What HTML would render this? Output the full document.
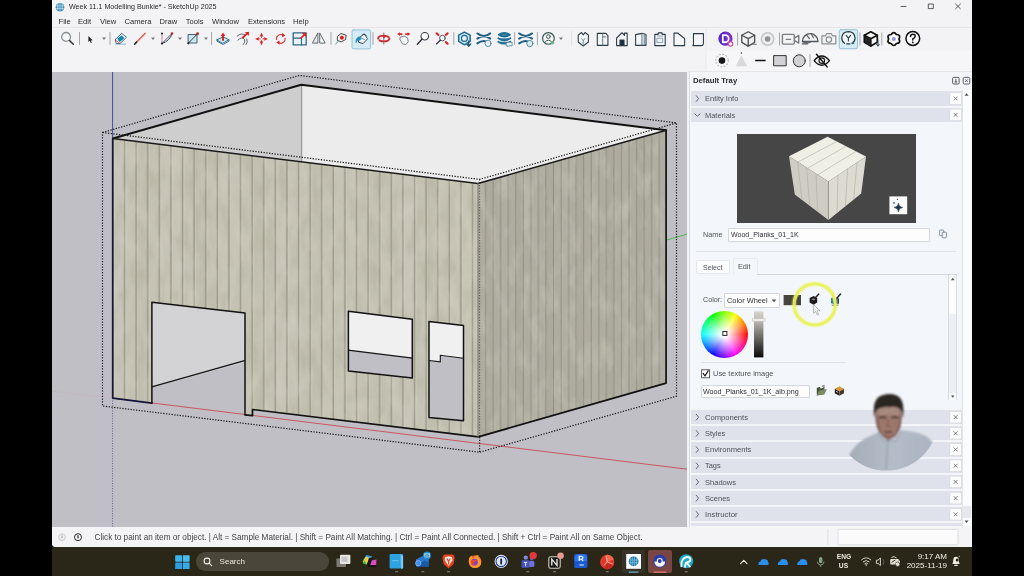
<!DOCTYPE html>
<html>
<head>
<meta charset="utf-8">
<title>SketchUp</title>
<style>
*{box-sizing:border-box;margin:0;padding:0}
html,body{width:1024px;height:576px;overflow:hidden;background:#000;font-family:"Liberation Sans",sans-serif;}
#root{filter:blur(0.45px);position:absolute;left:0;top:0;width:1024px;height:576px;overflow:hidden;background:#000}
.abs{position:absolute}
#win{position:absolute;left:52px;top:0;width:920px;height:547px;background:#f3f3f6;border-radius:0 0 0 4px;overflow:hidden}
#title{position:absolute;left:16.6px;top:1.3px;font-size:8px;color:#2a2a2a;white-space:nowrap;line-height:12px;transform:scaleX(0.891);transform-origin:0 50%}
.menu{position:absolute;top:15.5px;font-size:7.6px;color:#2a2a2a;white-space:nowrap;line-height:11px}
#vp{position:absolute;left:0;top:72px;width:634.5px;height:455px;background:#c0bfc5}
#tray{position:absolute;left:637px;top:72px;width:283px;height:455px;background:#f4f5f9}
.row{position:absolute;width:271px;height:14.2px;background:#dfe2eb;}
.row span{transform-origin:0 50%;position:absolute;left:13.9px;top:2.9px;font-size:7.7px;line-height:10px;color:#4e5159;white-space:nowrap}
.xb{position:absolute;left:260.5px;width:11.6px;height:11.6px;background:#fafbfd;border:0.7px solid #d9dbe2}
.lbl{transform-origin:0 50%;font-size:7.7px;line-height:10px;color:#4e5159;white-space:nowrap}
.inp{background:#fdfdfe;border:0.7px solid #d4d7de;border-radius:1px}
.inp span{transform-origin:0 50%;position:absolute;left:1.4px;top:1.6px;font-size:7.7px;line-height:10px;color:#2e3036;white-space:nowrap}
#status{position:absolute;left:0;top:527px;width:920px;height:20px;background:#f4f4f6}
#status .t{position:absolute;left:42.5px;top:5px;font-size:8.2px;line-height:11px;color:#444;white-space:nowrap}
#taskbar{position:absolute;left:52px;top:547px;width:920px;height:29px;background:#2a2618}
</style>
</head>
<body>
<div id="root">
<div id="win">
  <div id="title">Week 11.1 Modelling Bunkie* - SketchUp 2025</div>
  <div class="menu" style="left:6.5px">File</div>
  <div class="menu" style="left:26px">Edit</div>
  <div class="menu" style="left:48px">View</div>
  <div class="menu" style="left:72.5px">Camera</div>
  <div class="menu" style="left:107.5px">Draw</div>
  <div class="menu" style="left:133.8px">Tools</div>
  <div class="menu" style="left:160px">Window</div>
  <div class="menu" style="left:196px">Extensions</div>
  <div class="menu" style="left:241px">Help</div>
  <div id="msep" class="abs" style="left:0;top:27.2px;width:920px;height:1px;background:#e6e6ea"></div>
  <svg class="abs" style="left:-52px;top:0" width="1024" height="76" viewBox="0 0 1024 76" fill="none" stroke-linecap="round" stroke-linejoin="round">
<defs>
<path id="dd" d="M-2 -1 L2 -1 L0 1.4 Z" fill="#777" stroke="none"/>
<path id="sep" d="M0 -6 V6" stroke="#9a9ca2" stroke-width="0.9"/>
</defs>
<rect id="tb2bg" x="706" y="50.5" width="266" height="21" fill="#f6f6f9" stroke="none"/><path d="M706 29 V71" stroke="#e6e6ea" stroke-width="0.8"/><path d="M689 71.7 H972" stroke="#dcdce1" stroke-width="0.8"/>
<!-- window controls -->
<path d="M901 6.5 H906" stroke="#333" stroke-width="0.8"/>
<rect x="928.7" y="4" width="4.6" height="4.6" stroke="#333" stroke-width="0.8"/>
<path d="M955.6 4 L960.4 8.8 M960.4 4 L955.6 8.8" stroke="#333" stroke-width="0.8"/>
<!-- app icon -->
<g transform="translate(60,7.2)">
<circle r="4.3" fill="#1b78a8"/>
<path d="M-2.6 -2.8 V3 M-0.9 -3.9 V4 M0.9 -3.9 V4 M2.6 -2.8 V3 M-3.8 -1.2 H3.8 M-3.8 1.2 H3.8" stroke="#e6f2f8" stroke-width="0.6"/>
</g>
<!-- row1 -->
<g transform="translate(0,38.5)">
<!-- search -->
<g transform="translate(67.5,0)"><circle cx="-1.4" cy="-1.6" r="4.4" stroke="#8a9296" stroke-width="1.3" fill="#f6f8f8"/><path d="M2 2 L5.8 5.8" stroke="#333" stroke-width="1.5"/></g>
<use href="#sep" x="79.5"/>
<!-- select -->
<path d="M88.4 -2.6 L88.4 3.4 L89.8 2.3 L90.8 4.6 L91.8 4.1 L90.8 1.9 L92.6 1.7 Z" fill="#222" stroke="none"/>
<use href="#dd" x="104"/>
<use href="#sep" x="110"/>
<!-- eraser -->
<g transform="translate(120.5,0)"><path d="M-5.2 1 L1.2 -5.2 L6 -1.2 L-0.6 5 L-3.6 5 Z" fill="#fff" stroke="#2a5a78" stroke-width="0.9"/><path d="M-3.4 -0.8 L2.4 -5 L5.6 -1.4 L-0.4 3.6 Z" fill="#1687b3" stroke="none" transform="translate(-0.6,0.8) scale(0.8)"/><path d="M-5 5.6 H5" stroke="#49a" stroke-width="0.7"/><path d="M-5.2 1.2 L-0.6 5" stroke="#c33" stroke-width="0.8"/></g>
<!-- pencil -->
<g transform="translate(140,0)"><path d="M-3.8 4 L5 -5" stroke="#d8605a" stroke-width="1.7"/><path d="M-3 4.2 L5.6 -4.4" stroke="#f0c0b8" stroke-width="0.7"/><path d="M-5.4 5.8 L-3.4 3.6" stroke="#222" stroke-width="1.5"/></g>
<use href="#dd" x="153"/>
<!-- arc -->
<g transform="translate(167,0)"><path d="M-5 5 Q3 2.5 5 -5" stroke="#2a3a4a" stroke-width="1"/><path d="M-5 5 L5 -5" stroke="#2a3a4a" stroke-width="0.9"/><path d="M-5 5 Q1 1 4 -4 L-5 5" fill="#a8d4e6" stroke="none" opacity="0.7"/><path d="M-5 5 V-5" stroke="#b06080" stroke-width="0.8" stroke-dasharray="1 1"/><circle cx="-5" cy="-5" r="1" fill="#222"/><circle cx="-5" cy="5" r="1.1" fill="#222"/><circle cx="5" cy="-5" r="1.3" fill="#c22"/></g>
<use href="#dd" x="180"/>
<!-- rect -->
<g transform="translate(193,0)"><rect x="-4.5" y="-4" width="8.5" height="8.5" fill="#cfe6f0" stroke="#2a5068" stroke-width="0.9"/><path d="M-4.5 4.5 L4.4 -4.6" stroke="#222" stroke-width="0.9"/><circle cx="-4.6" cy="4.8" r="1.1" fill="#222"/><circle cx="4.6" cy="-4.8" r="1.4" fill="#c22"/></g>
<use href="#dd" x="206"/>
<use href="#sep" x="211.5"/>
<!-- push pull -->
<g transform="translate(223,0)"><path d="M-6 1.2 L0 -1.6 L6 1.2 L0 4.6 Z" fill="#cfe8f2" stroke="#1c6a8c" stroke-width="0.9"/><path d="M-6 1.2 V2.6 L0 6 L6 2.6 V1.2" stroke="#1c6a8c" stroke-width="0.9"/><path d="M0 1.4 V-3" stroke="#d22" stroke-width="2"/><path d="M-2.4 -2.6 L0 -6 L2.4 -2.6 Z" fill="#d22" stroke="none"/></g>
<!-- follow me -->
<g transform="translate(242.5,0)"><path d="M-5.4 -2.4 Q-1 -6.4 3.2 -3.2" stroke="#5a6a74" stroke-width="1"/><path d="M-4.6 1.6 Q-0.6 -2.6 2 1 Q3.2 3.6 0.8 6" stroke="#5a6a74" stroke-width="1"/><path d="M4.4 0.6 Q5.6 3.6 3.6 6" stroke="#5a6a74" stroke-width="1"/><path d="M0.4 -1 L5.6 -5.8" stroke="#d22" stroke-width="1.8"/><path d="M2.4 -6.4 H6.4 V-2.4 Z" fill="#d22" stroke="none"/></g>
<!-- move -->
<g transform="translate(261.5,0.4)" fill="#d4262a" stroke="none"><path d="M0 -6.5 L1.9 -2.2 L0 -3 L-1.9 -2.2 Z"/><path d="M0 6.5 L1.9 2.2 L0 3 L-1.9 2.2 Z"/><path d="M-6.5 0 L-2.2 -1.9 L-3 0 L-2.2 1.9 Z"/><path d="M6.5 0 L2.2 -1.9 L3 0 L2.2 1.9 Z"/><path d="M0 -3 V-1.4 M0 3 V1.4 M-3 0 H-1.4 M3 0 H1.4" stroke="#d4262a" stroke-width="0.9"/></g>
<!-- rotate -->
<g transform="translate(280.8,0.4)"><path d="M-4.3 0.6 A4.3 4.3 0 0 1 2.2 -3.7" stroke="#d4363a" stroke-width="1.15"/><path d="M4.3 -0.6 A4.3 4.3 0 0 1 -2.2 3.7" stroke="#d4363a" stroke-width="1.15"/><path d="M1.2 -5.8 L4.6 -3.4 L1.4 -1.6 Z" fill="#d4262a" stroke="none"/><path d="M-1.2 5.8 L-4.6 3.4 L-1.4 1.6 Z" fill="#d4262a" stroke="none"/></g>
<!-- scale -->
<g transform="translate(299.8,0.3) scale(1.18,1.14)"><rect x="-5.6" y="-5.2" width="11" height="10.6" fill="#eaf2f6" stroke="#2c6a88" stroke-width="1.1"/><path d="M-5.6 -0.6 H1.4 V5.4" stroke="#2c6a88" stroke-width="0.9"/><path d="M1 -0.6 L4.4 -4.2" stroke="#d22" stroke-width="1.4"/><path d="M1.6 -5.2 H5.4 V-1.4 Z" fill="#d22" stroke="none"/></g>
<!-- flip -->
<g transform="translate(318.8,0)"><path d="M-0.9 -5.2 L-0.9 4.6 L-6 4.6 Z" fill="#e6eaec" stroke="#555e64" stroke-width="0.9"/><path d="M0.9 -5.2 L0.9 4.6 L6 4.6 Z" fill="#f4f6f6" stroke="#555e64" stroke-width="0.9"/></g>
<use href="#sep" x="331"/>
<!-- tape -->
<g transform="translate(341,0)"><path d="M-3.2 -2.4 L0 -5 L5.2 -3.2 L4.6 1 L0.2 3.4 L-3.4 2 Z" fill="#f2f2f2" stroke="#333" stroke-width="0.9"/><circle cx="0.9" cy="-0.8" r="2" fill="#d22" stroke="none"/><path d="M-3 3 L-5.4 5.6" stroke="#49a" stroke-width="1"/></g>
<!-- paint bucket active -->
<rect x="352" y="-8.6" width="18.6" height="19" rx="1.6" fill="#d2ebf5" stroke="#7fb6cd" stroke-width="0.8"/>
<g transform="translate(361.4,0.8)"><path d="M-1.6 -2 L2.6 -5.4 L6.2 -0.6 L1.6 4.4 L-2.6 3 Z" fill="#eef6f9" stroke="#2a3a44" stroke-width="0.9"/><path d="M0.6 -3.8 Q3.4 -7 5 -3.4" stroke="#2a3a44" stroke-width="0.8"/><path d="M-1.2 -2.4 Q-5.6 -2.6 -5.4 3.2 Q-4 -0.2 -1 0.2 Z" fill="#1a8ab6" stroke="#1a8ab6" stroke-width="0.8"/><path d="M-1.2 -1.6 L3 0.2" stroke="#1a8ab6" stroke-width="0.8"/></g>
<use href="#sep" x="373"/>
<!-- orbit -->
<g transform="translate(383.8,0)"><ellipse cx="0" cy="0" rx="5.6" ry="2.9" stroke="#d4262a" stroke-width="1.9" stroke-dasharray="11 2.2 11.6 2.2"/><path d="M0 -5.6 V5.6" stroke="#667" stroke-width="0.9"/><path d="M-1 -3 L2.6 -2.4 L0 0 Z" fill="#d22" stroke="none"/></g>
<!-- pan -->
<g transform="translate(403.8,0)"><path d="M-4.6 -4.4 H-1.4 M1.4 -4.4 H4.6" stroke="#d4262a" stroke-width="1.7" stroke-linecap="butt"/><path d="M-3.8 -6.2 L-6.6 -4.4 L-3.8 -2.6 Z M3.8 -6.2 L6.6 -4.4 L3.8 -2.6 Z" fill="#d4262a" stroke="none"/><path d="M-3.4 -1.4 L0.4 -2.4 L3.8 -0.6 L4.4 3.4 L2 6 L-1.2 5.4 L-3.6 1.6 Z" fill="#f4f6f6" stroke="#6a767c" stroke-width="0.9"/></g>
<!-- zoom -->
<g transform="translate(423,0)"><circle cx="1.8" cy="-2.3" r="3.8" stroke="#3a3e44" stroke-width="1.05" fill="#fafafa"/><path d="M-1 0.6 L-5.6 5.7" stroke="#223" stroke-width="1.35"/></g>
<!-- zoom extents -->
<g transform="translate(442,0)"><circle cx="0.4" cy="-0.4" r="2.8" stroke="#556" stroke-width="1" fill="#f4fafa"/><path d="M-1.6 1.6 L-5.4 5.4" stroke="#223" stroke-width="1.3"/><path d="M-5.4 -5.2 L-3.6 -3.4 M5.6 -5.2 L3.8 -3.4 M5.6 5.2 L3.8 3.6" stroke="#d4262a" stroke-width="2.1"/></g>
<use href="#sep" x="453.8"/>
<!-- warehouse 1 -->
<g transform="translate(464.4,0.6) scale(1.15)"><path d="M0 -6 L5 -3.4 L5 2 L0 5 L-5 2 L-5 -3.4 Z" fill="#cfe4ee" stroke="#1c6a90" stroke-width="1.3"/><circle cx="0" cy="-0.6" r="2.6" stroke="#1c6a90" stroke-width="1" fill="#e8f2f6"/><path d="M3.8 1.6 V6 M2 4.2 L3.8 6.2 L5.6 4.2" stroke="#1c5a7c" stroke-width="1.1"/></g>
<!-- warehouse 2 -->
<g transform="translate(483.8,0.6) scale(1.12,1.18)"><path d="M-5.8 -4.8 Q0 -0.6 5.8 -4.8 M-5.8 -0.4 Q0 -4.4 5.8 -0.4 M-5.8 3.6 Q0 -0.4 5.8 3.6" stroke="#1f5f84" stroke-width="1.7"/><circle cx="3.8" cy="3.6" r="2.7" fill="#e8f2f6" stroke="#4a88a4" stroke-width="0.8"/></g>
<!-- warehouse 3 -->
<g transform="translate(504.3,0.4) scale(1.12,1.15)"><path d="M-5 -3.6 Q0 -7 5 -3.6 Q0 -0.4 -5 -3.6 Z M-5.4 -0.6 Q0 3 5.4 -0.6 M-5.4 2.4 Q0 6 5.4 2.4" stroke="#1c6a90" stroke-width="1.5" fill="#3a88ac"/><path d="M2 3 H7 V6 H4 L3 7 V6 H2 Z" fill="#eaf2f6" stroke="#4a88a4" stroke-width="0.7"/></g>
<use href="#sep" x="514.6"/>
<g transform="translate(525.6,0.6) scale(1.12,1.18)"><path d="M-5.8 -4.8 Q0 -0.6 5.8 -4.8 M-5.8 -0.4 Q0 -4.4 5.8 -0.4 M-5.8 3.6 Q0 -0.4 5.8 3.6" stroke="#1f5f84" stroke-width="1.7"/><circle cx="3.8" cy="3.8" r="2.7" fill="#dbe8ee" stroke="#4a88a4" stroke-width="0.8"/></g>
<use href="#sep" x="537.4"/>
<!-- user -->
<g transform="translate(548.4,-0.1) scale(1.1)"><circle r="5.3" stroke="#3c5a58" stroke-width="1.1" fill="#f2f6f4"/><circle cx="0" cy="-1.6" r="1.7" stroke="#3c5a58" stroke-width="0.9"/><path d="M-3.2 3.6 Q0 -0.6 3.2 3.6" stroke="#3c5a58" stroke-width="0.9"/><circle cx="3.6" cy="3.8" r="1.7" fill="#6cb488" stroke="none"/></g>
<use href="#dd" x="561"/>
<path d="M571.5 -7 V7" stroke="#dcdce0" stroke-width="0.8"/>
<!-- views -->
<g stroke="#2a3a46" stroke-width="0.95" fill="#f4f6f8">
<g transform="translate(583.2,0.8) scale(1.13,1.25)"><path d="M-4.4 -3.4 L-1.4 -5.4 L0 -3.6 L1.6 -5.4 L4.6 -3.4 L4.6 2.2 L0 5.4 L-4.4 2.2 Z"/><path d="M0 5 V1 M-1.6 -0.6 L0 1 L1.6 -0.6" stroke="#6a8a9a" stroke-width="0.8" fill="none"/></g>
<g transform="translate(602.5,0.8) scale(1.13,1.25)"><path d="M-4.6 -4.8 H3 L4.8 -3 V4.8 H-4.6 Z"/><path d="M0.2 -4.6 V4.6 M0.2 -2 H3" stroke="#5a7686" stroke-width="0.8" fill="none"/></g>
<g transform="translate(622,0.8) scale(1.13,1.25)"><path d="M-4.8 5 V-1 L0 -5.2 L2.2 -3.2 V-5 H4.6 V5 Z"/><path d="M-1.8 5 V0.6 H1.8 V5" fill="#1c2c38"/></g>
<g transform="translate(640.8,0.8) scale(1.13,1.25)"><path d="M-4.6 -3.8 L1 -4.8 L4.6 -3.8 V4.8 H-4.6 Z"/><path d="M1 -4.6 V4.6 M3 -3.6 V4.6" stroke="#5a7686" stroke-width="0.8" fill="none"/></g>
<g transform="translate(660,0.8) scale(1.13,1.25)"><path d="M-4.6 -4 H-1.6 V-5.2 H1.8 V-4 H4.6 V5 H-4.6 Z"/><path d="M-2.4 -0.8 H2.4 V2.6 H-2.4 Z M-2.4 -2.6 H2.4" stroke="#7a96a6" stroke-width="0.7" fill="none"/></g>
<g transform="translate(679.2,0.8) scale(1.13,1.25)"><path d="M-4.6 5 V-5 H-1.4 L4.8 -0.6 V5 Z"/></g>
<g transform="translate(698,0.8) scale(1.13,1.25)"><path d="M-4 -4.6 H4.8 V3.6 Q4.4 5 3 5 H-4.6 Q-3.6 4 -4 2.6 Z"/></g>
</g>
<!-- purple D -->
<g transform="translate(725.4,0.2) scale(1.18)"><circle r="6" fill="#5a28c8"/><circle r="6" fill="#c43ad8" opacity="0.35" cx="0" cy="0" clip-path="inset(0 0 0 50%)"/><path d="M-2.2 -3 V3 H-0.2 A3 3 0 0 0 -0.2 -3 Z" stroke="#fff" stroke-width="1.5"/><circle cx="4.4" cy="4.4" r="1.9" fill="#f0e8f8" stroke="#d04a9a" stroke-width="0.9"/></g>
<use href="#sep" x="737.6" y="0.5"/>
<!-- grey cube -->
<g transform="translate(748.2,0.2) scale(1.24)" stroke="#4e5458" stroke-width="1.1"><path d="M-5.2 -2.8 L0 -5.6 L5.2 -2.8 V3 L0 6 L-5.2 3 Z" fill="#f2f2f2"/><path d="M-5.2 -2.8 L0 0 L5.2 -2.8 M0 0 V6"/><path d="M3.4 4.6 H6.4" stroke="#888" stroke-width="0.9"/></g>
<g transform="translate(767.6,0.5) scale(1.2)"><circle r="5.2" stroke="#c4c6c8" stroke-width="1.3" fill="#efeff1"/><circle r="2.3" fill="#8e9092" stroke="none"/></g>
<use href="#sep" x="779.5" y="0.5"/>
<!-- video camera -->
<g transform="translate(790.6,0.6) scale(1.24)" stroke="#7a7e82" stroke-width="1.1"><rect x="-6.6" y="-3.8" width="9.6" height="7.8" rx="0.8" fill="#f4f4f4"/><path d="M3 -0.8 L6.6 -3 V3.2 L3 1"/><path d="M-3.6 0.2 H0" stroke-width="1"/></g>
<!-- dome -->
<g transform="translate(810.2,-0.2) scale(1.22)" stroke="#555a5e" stroke-width="1.1"><path d="M-6.4 2.6 A6.4 6.4 0 0 1 6.4 2.6 Z" fill="#f2f2f2"/><path d="M-6.4 2.6 Q-3 4.6 0 3.2 M-3 -2.8 L-0.6 0.2 M1 -3.6 L2.6 -0.4" stroke-width="0.9"/><path d="M-6.6 4.6 H-2" stroke-width="0.9"/></g>
<!-- camera -->
<g transform="translate(828.9,0.2) scale(1.12)" stroke="#8a8e92" stroke-width="1.1"><path d="M-6.2 -2.6 H-3 L-1.8 -4.6 H2 L3.2 -2.6 H6.2 V4.6 H-6.2 Z" fill="#f4f4f4"/><circle cx="0" cy="0.8" r="2.4"/></g>
<!-- active bulb -->
<rect x="839.3" y="-8.8" width="18.2" height="19" rx="1.6" fill="#d6edf6" stroke="#7fb6cd" stroke-width="0.8"/>
<g transform="translate(848.4,-0.4) scale(1.12)" stroke="#2a3a44" stroke-width="1.1"><path d="M-3.4 4.6 Q-6.4 2.4 -5.8 -1.2 Q-5 -5.6 0 -5.8 Q5 -5.6 5.8 -1.2 Q6.4 2.4 3.4 4.6" fill="#eef8fb"/><path d="M-2 -2.4 L0 0 L2 -2.4 M0 0 V2.6" stroke-width="1"/><path d="M-1.4 5.2 H1.4" stroke-width="1"/><circle cx="4" cy="4.4" r="1.2" fill="#3a6a88" stroke="none"/></g>
<use href="#sep" x="860" y="0.5"/>
<!-- black cube -->
<g transform="translate(870.8,0.2) scale(1.2)" stroke="#111" stroke-width="1.4"><path d="M-5.4 -2.8 L0 -5.8 L5.4 -2.8 V3 L0 6 L-5.4 3 Z" fill="#f6f6f6"/><path d="M-5.4 -2.8 L0 0 L5.4 -2.8 M0 0 V6"/><path d="M-5 -2.4 L0 0.2 V5.6 L-5 2.8 Z" fill="#222" stroke="none"/><path d="M6 1 V6 M4.8 4.6 L6 6.2 L7.2 4.6" stroke="#345" stroke-width="0.8"/></g>
<use href="#sep" x="881.8" y="0.5"/>
<!-- gear -->
<g transform="translate(893.8,0.5)"><path d="M-2.60 -4.50 Q0.00 -8.45 2.60 -4.50 Q7.32 -4.22 5.20 0.00 Q7.32 4.22 2.60 4.50 Q0.00 8.45 -2.60 4.50 Q-7.32 4.22 -5.20 0.00 Q-7.32 -4.22 -2.60 -4.50 Z" stroke="#111" stroke-width="1.7" fill="#fafafa" stroke-linejoin="round"/><circle r="2.1" fill="#9a98dc" stroke="none"/></g>
<!-- help -->
<g transform="translate(912.8,0) scale(1.15)"><circle r="6" stroke="#111" stroke-width="1.3" fill="#fafafa"/><path d="M-2 -1.8 Q-1.8 -3.8 0 -3.8 Q2.2 -3.8 2.1 -1.9 Q2 -0.6 0 0.4 V1.4" stroke="#111" stroke-width="1.3"/><circle cx="0" cy="3.4" r="0.8" fill="#111" stroke="none"/></g>
</g>
<!-- row2 -->
<g transform="translate(0,60.6)">
<g transform="translate(722,0)"><circle r="3.3" fill="#161616" stroke="none"/><circle r="6.3" stroke="#b4b6b8" stroke-width="1.1" stroke-dasharray="0.9 2.4"/></g>
<g transform="translate(741.4,0)"><path d="M0 -5.4 L5.8 5.6 H-5.8 Z" fill="#d8d8da" stroke="none"/><circle cx="0" cy="-7.6" r="0.8" fill="#333" stroke="none"/></g>
<path d="M755.2 0 H765.6" stroke="#111" stroke-width="1.5" stroke-linecap="butt"/>
<rect x="774" y="-5" width="12.2" height="10.2" fill="#d2d2d6" stroke="#333" stroke-width="1"/>
<circle cx="799.3" cy="0.2" r="6" fill="#d2d2d6" stroke="#333" stroke-width="1"/>
<use href="#sep" x="810"/>
<g transform="translate(821.8,0) scale(1.16)"><path d="M-6.6 0 Q0 -8 6.6 0 Q0 8 -6.6 0 Z" stroke="#111" stroke-width="1.2" fill="#f4f4f4"/><circle r="2.4" stroke="#111" stroke-width="1"/><path d="M-4.6 -5.4 L4.6 5.4" stroke="#111" stroke-width="1.3"/></g>
</g>
</svg>

  <div id="vp">
  <svg class="abs" style="left:-52px;top:-72px" width="1024" height="576" viewBox="0 0 1024 576" fill="none">
<defs>
<pattern id="pf" x="112.9" y="0" width="58" height="600" patternUnits="userSpaceOnUse">
<rect width="58" height="600" fill="#c3c1b1"/>
<rect x="0" width="11.6" height="600" fill="#c6c4b5"/>
<rect x="23.2" width="11.6" height="600" fill="#c0beae"/>
<rect x="46.4" width="11.6" height="600" fill="#c5c3b4"/>
<g stroke="#b4b2a3" stroke-width="2.2"><path d="M0 0V600M11.6 0V600M23.2 0V600M34.8 0V600M46.4 0V600M58 0V600"/></g>
<g stroke="#949283" stroke-width="0.9"><path d="M0 0V600M11.6 0V600M23.2 0V600M34.8 0V600M46.4 0V600M58 0V600"/></g>
<g stroke="#cfcdbf" stroke-width="0.7" opacity="0.8"><path d="M1.6 0V600M13.2 0V600M24.8 0V600M36.4 0V600M48 0V600"/></g>
</pattern>
<pattern id="pr" x="478" y="0" width="30.2" height="600" patternUnits="userSpaceOnUse">
<rect width="30.2" height="600" fill="#afada0"/>
<rect x="7.55" width="7.55" height="600" fill="#acaa9d"/>
<rect x="22.65" width="7.55" height="600" fill="#b1afa3"/>
<g stroke="#908e82" stroke-width="1"><path d="M0 0V600M7.55 0V600M15.1 0V600M22.65 0V600M30.2 0V600"/></g>
</pattern>
<filter id="nzL" color-interpolation-filters="sRGB" x="0" y="0" width="100%" height="100%"><feTurbulence type="fractalNoise" baseFrequency="0.09 0.035" numOctaves="3" seed="7" result="t"/><feColorMatrix in="t" type="matrix" values="0 0 0 0 0.83  0 0 0 0 0.82  0 0 0 0 0.77  2.0 0 0 0 -0.92"/><feComposite in2="SourceGraphic" operator="in"/></filter>
<filter id="nzD" color-interpolation-filters="sRGB" x="0" y="0" width="100%" height="100%"><feTurbulence type="fractalNoise" baseFrequency="0.09 0.035" numOctaves="3" seed="7" result="t"/><feColorMatrix in="t" type="matrix" values="0 0 0 0 0.68  0 0 0 0 0.67  0 0 0 0 0.60  -2.0 0 0 0 0.95"/><feComposite in2="SourceGraphic" operator="in"/></filter>
</defs>
<!-- axes faint -->
<path d="M112.6 398 L52 391.2" stroke="#c49aa2" stroke-width="0.8" stroke-dasharray="1 1.6" opacity="0.6"/>
<path d="M112.6 398 L52 414.6" stroke="#a8c0a8" stroke-width="0.8" stroke-dasharray="1 1.6" opacity="0.5"/>
<path d="M112.6 398 V527" stroke="#66669a" stroke-width="1" stroke-dasharray="1.1 1.4"/>
<path d="M112.6 72 V139" stroke="#3c3c9e" stroke-width="0.9"/>
<path d="M666 240.2 L687 234.2" stroke="#46be58" stroke-width="1"/>
<!-- inner walls -->
<path d="M112.9 138.5 L301.25 84.75 L301.25 170 Z" fill="#cecece"/>
<path d="M301.25 84.75 L666.25 130.25 L478 184 L301.25 170 Z" fill="#ececec"/>
<path d="M301.6 85 V163" stroke="#9c9c9c" stroke-width="1.3"/>
<!-- door1 interior -->
<path d="M151 301 L246 312 V362 L151 388 Z" fill="#d3d3d5"/>
<path d="M151 387.1 L245.4 360.4" stroke="#141414" stroke-width="1.4"/>
<!-- window interior -->
<path d="M347 310 L413 318 V358.2 L347 350.1 Z" fill="#f0f0f0"/>
<path d="M348 350.2 L412.6 358.2" stroke="#141414" stroke-width="1.2"/>
<!-- door2 interior -->
<path d="M428 320 L464 324 V358.4 L440.3 355.4 V362 L428 360.4 Z" fill="#f0f0f0"/>
<path d="M429 360.5 L440.3 361.9 V355.3 L463.5 358.2" stroke="#141414" stroke-width="1.1"/>
<!-- red axis -->
<path d="M112.6 398.1 L687 469.2" stroke="#cc4a54" stroke-width="1" opacity="0.9"/>
<!-- front wall with holes -->
<path fill-rule="evenodd" fill="url(#pf)" d="M112.8 138.5 L478 183.5 L478.3 436.9 L252.5 409.5 L252.5 415.7 L245 414.8 L245 313.1 L151.9 302.2 L151.9 403.1 L112.6 398.1 Z M348.4 311.3 L412.3 319.2 L412.3 377.9 L348.4 371.1 Z M429 321.4 L463.5 325.5 L463.5 420.8 L429 417.4 Z"/>
<path filter="url(#nzL)" fill-rule="evenodd" fill="#fff" opacity="0.55" d="M112.8 138.5 L478 183.5 L478.3 436.9 L252.5 409.5 L252.5 415.7 L245 414.8 L245 313.1 L151.9 302.2 L151.9 403.1 L112.6 398.1 Z M348.4 311.3 L412.3 319.2 L412.3 377.9 L348.4 371.1 Z M429 321.4 L463.5 325.5 L463.5 420.8 L429 417.4 Z"/>
<path filter="url(#nzD)" fill-rule="evenodd" fill="#fff" opacity="0.55" d="M112.8 138.5 L478 183.5 L478.3 436.9 L252.5 409.5 L252.5 415.7 L245 414.8 L245 313.1 L151.9 302.2 L151.9 403.1 L112.6 398.1 Z M348.4 311.3 L412.3 319.2 L412.3 377.9 L348.4 371.1 Z M429 321.4 L463.5 325.5 L463.5 420.8 L429 417.4 Z"/>
<!-- right wall -->
<path fill="url(#pr)" d="M478 183.5 L666.25 130.25 L666.25 383.1 L478.3 436.9 Z"/>
<path filter="url(#nzL)" fill="#fff" opacity="0.45" d="M478 183.5 L666.25 130.25 L666.25 383.1 L478.3 436.9 Z"/>
<path filter="url(#nzD)" fill="#fff" opacity="0.5" d="M478 183.5 L666.25 130.25 L666.25 383.1 L478.3 436.9 Z"/>
<!-- edges -->
<g stroke="#111" stroke-linejoin="round" stroke-linecap="round">
<path d="M112.9 138.5 L301.25 84.75 L666.25 130.25" stroke-width="1.9"/>
<path d="M666.1 130.25 V383.1 L478.3 436.9 L252.5 409.5 V415.7 L245 414.8" stroke-width="1.7"/>
<path d="M112.7 138.5 V398.1 L151.9 403.1" stroke-width="1.7" stroke="#14143a"/>
<path d="M151.9 403.1 V302.2 L245 313.1 V414.8" stroke-width="1.5"/>
<path d="M348.4 311.3 L412.3 319.2 L412.3 377.9 L348.4 371.1 Z" stroke-width="1.5"/>
<path d="M429 321.4 L463.5 325.5 L463.5 420.8 L429 417.4 Z" stroke-width="1.5"/>
<path d="M112.9 138.5 L478 183.5 L666.25 130.25" stroke-width="1.5" stroke="#1a1a1a"/>
<path d="M478 183.5 V436.9" stroke-width="0.9" stroke="#77756c"/>
</g>
<!-- selection bbox dotted -->
<g stroke="#161616" stroke-width="1.2" stroke-dasharray="1.3 1.45">
<path d="M102.5 132.5 L299.4 75.4 L676.5 122.9 V396.2 L479.6 452.2 L102.5 406 Z"/>
<path d="M102.5 132.5 L479.6 179.4 L676.5 122.9"/>
<path d="M479.6 179.4 V437" opacity="0.5"/><path d="M479.6 437 V452.2"/>
</g>
</svg>

  </div>
  <div id="tray">
  <div class="abs" style="left:-689px;top:-72px;width:1024px;height:576px">
<div class="abs" style="left:689px;top:72px;width:1px;height:455px;background:#dcdde3"></div>
<div class="abs" style="left:692.8px;top:76px;font-size:8px;font-weight:bold;color:#2c2e33;line-height:10px;white-space:nowrap;transform:scaleX(0.965);transform-origin:0 50%" id="dt">Default Tray</div>
<svg class="abs" style="left:0;top:0" width="1024" height="576" viewBox="0 0 1024 576" fill="none">
<rect x="952.6" y="77.4" width="6.6" height="6.6" rx="1.2" stroke="#4a4c52" stroke-width="0.9" fill="#f4f5f9"/>
<path d="M955.9 79 V82 M954.6 82 H957.2" stroke="#4a4c52" stroke-width="1"/>
<rect x="963.2" y="77.4" width="6.6" height="6.6" rx="1.2" stroke="#4a4c52" stroke-width="0.9" fill="#f4f5f9"/>
<path d="M965.2 79.4 L967.8 82 M967.8 79.4 L965.2 82" stroke="#4a4c52" stroke-width="0.8"/>
</svg>
<!-- tray scrollbar -->
<div class="abs" style="left:962px;top:90px;width:9.4px;height:436px;background:#fbfcfe;border-left:0.7px solid #e2e4ea"></div>
<div class="abs" style="left:962.6px;top:505.5px;width:8.8px;height:12px;background:#e6e8ee"></div>
<svg class="abs" style="left:0;top:0" width="1024" height="576" viewBox="0 0 1024 576"><path d="M964.6 95.8 L966.6 93.2 L968.6 95.8 Z M964.6 520.4 L966.6 523 L968.6 520.4 Z" fill="#555"/></svg>
<!-- rows -->
<div class="row" style="left:691px;top:91.4px"><span style="transform:scaleX(0.974)">Entity Info</span></div>
<div class="row" style="left:691px;top:107.8px"><span style="transform:scaleX(0.968)">Materials</span></div>
<div class="abs" style="left:691px;top:122.4px;width:271px;height:285.6px;background:#f3f7fb"></div>
<div class="row" style="left:691px;top:410px"><span style="transform:scaleX(0.986)">Components</span></div>
<div class="row" style="left:691px;top:426.2px"><span style="transform:scaleX(0.97)">Styles</span></div>
<div class="row" style="left:691px;top:442.4px"><span style="transform:scaleX(0.987)">Environments</span></div>
<div class="row" style="left:691px;top:458.6px"><span style="transform:scaleX(0.97)">Tags</span></div>
<div class="row" style="left:691px;top:474.8px"><span style="transform:scaleX(0.98)">Shadows</span></div>
<div class="row" style="left:691px;top:491px"><span style="transform:scaleX(0.98)">Scenes</span></div>
<div class="row" style="left:691px;top:507.2px"><span style="transform:scaleX(1.017)">Instructor</span></div>
<div class="row" style="left:691px;top:523.4px;height:3px"></div>
<!-- X buttons + chevrons -->
<svg class="abs" style="left:0;top:0" width="1024" height="576" viewBox="0 0 1024 576" fill="none">
<defs><g id="xb"><rect x="0" y="0" width="11.6" height="11.6" fill="#fbfcfd" stroke="#d6d8de" stroke-width="0.7"/><path d="M3.9 3.9 L7.7 7.7 M7.7 3.9 L3.9 7.7" stroke="#55585f" stroke-width="0.75"/></g>
<path id="chr" d="M0 -3.2 L2.6 0 L0 3.2" stroke="#55585f" stroke-width="0.9"/>
</defs>
<use href="#xb" x="949.8" y="92.7"/><use href="#xb" x="949.8" y="109.1"/>
<use href="#xb" x="949.8" y="411.3"/><use href="#xb" x="949.8" y="427.5"/><use href="#xb" x="949.8" y="443.7"/><use href="#xb" x="949.8" y="459.9"/><use href="#xb" x="949.8" y="476.1"/><use href="#xb" x="949.8" y="492.3"/><use href="#xb" x="949.8" y="508.5"/>
<use href="#chr" x="696" y="98.6"/>
<path d="M694.4 113.6 L697.4 116.2 L700.4 113.6" stroke="#55585f" stroke-width="0.9"/>
<use href="#chr" x="696" y="417.2"/><use href="#chr" x="696" y="433.4"/><use href="#chr" x="696" y="449.6"/><use href="#chr" x="696" y="465.8"/><use href="#chr" x="696" y="482"/><use href="#chr" x="696" y="498.2"/><use href="#chr" x="696" y="514.4"/>
</svg>
<div class="abs" style="left:701.1px;top:311.1px;width:46.8px;height:46.8px;border-radius:50%;background:radial-gradient(circle closest-side,#fff 0%,rgba(255,255,255,0.96) 14%,rgba(255,255,255,0) 100%),conic-gradient(from 90deg,#ff0000,#ff00ff,#0000ff,#00ffff,#00ff00,#ffff00,#ff0000)"></div>
<!-- preview -->
<div class="abs" style="left:737px;top:134px;width:179.2px;height:89px;background:#464646"></div>
<svg class="abs" style="left:0;top:0" width="1024" height="576" viewBox="0 0 1024 576" fill="none">
<defs><linearGradient id="vg" x1="0" y1="0" x2="0" y2="1"><stop offset="0" stop-color="#d8d4cc"/><stop offset="0.22" stop-color="#b8b4ac"/><stop offset="1" stop-color="#0a0a0a"/></linearGradient>
<radialGradient id="wg"><stop offset="0" stop-color="#fff"/><stop offset="0.18" stop-color="#fff" stop-opacity="0.95"/><stop offset="1" stop-color="#fff" stop-opacity="0"/></radialGradient>
<clipPath id="wc"><circle cx="724.5" cy="334.5" r="23.4"/></clipPath>
</defs>
<!-- cube -->
<path d="M827.6 136.8 L866 156.6 L828.4 181.6 L789 156.2 Z" fill="#efefe6"/>
<path d="M789 156.2 L828.4 181.6 L828.4 220 L794.8 194.6 Z" fill="#cfcdc3"/>
<path d="M866 156.6 L828.4 181.6 L828.4 220 L861.2 193.6 Z" fill="#dddbd1"/>
<g stroke="#aeac9f" stroke-width="0.6"><path d="M836.5 141.6 L798 162 M846 146.4 L807.6 168.2 M856 151.4 L817.8 174.8"/><path d="M797.6 161.8 L802 200 M806.6 167.6 L809.8 206 M816 173.6 L817.6 212"/><path d="M838 175.2 L837 213 M847.6 168.8 L845.4 206.4 M857 162.6 L853.6 199.8"/></g>
<path d="M828.4 181.6 V220" stroke="#8a887e" stroke-width="0.7"/>
<!-- sparkle button -->
<rect x="889.4" y="196.4" width="17.8" height="17.8" fill="#fafafa"/>
<path d="M898.4 203 Q898.7 207.2 902.8 207.5 Q898.7 207.8 898.4 212 Q898.1 207.8 894 207.5 Q898.1 207.2 898.4 203 Z" fill="#1c3650" stroke="#1c3650" stroke-width="0.5"/>
<circle cx="894" cy="203" r="1" fill="#6a7a8a"/><circle cx="897.4" cy="199.4" r="0.7" fill="#8a5a5a"/>
<!-- copy icon -->
<rect x="939.6" y="230" width="4.2" height="5.6" rx="0.8" stroke="#6a7a8a" stroke-width="0.8" fill="#f3f7fb"/>
<rect x="942.2" y="232.2" width="4.2" height="5.6" rx="0.8" stroke="#6a7a8a" stroke-width="0.8" fill="#f3f7fb"/>
<!-- color wheel -->

<rect x="722.9" y="331.4" width="4" height="4" fill="#fff" stroke="#111" stroke-width="0.9"/>
<!-- value slider -->
<rect x="754" y="311.4" width="9.4" height="46" fill="url(#vg)"/>
<rect x="752.4" y="318.6" width="12.8" height="2.6" fill="#eceae6" stroke="#c8c6c2" stroke-width="0.5"/>
<!-- swatch -->
<rect x="783.6" y="295" width="17.4" height="10.2" fill="#47443d"/>
<!-- paint icons -->
<g transform="translate(813.6,300)"><path d="M-4 -2 L0 -4 L3.6 -2 L3.6 2.6 L0 4.8 L-4 2.6 Z" fill="#1c1c1c"/><path d="M-2.2 -0.8 L0 -1.8 L1.8 -0.8 L0 0.4 Z" fill="#8a8a8a"/><path d="M2 -2.6 L5.2 -6" stroke="#222" stroke-width="1.4" stroke-linecap="round"/></g>
<g transform="translate(835.4,300.4)"><path d="M-4.4 -2.4 L-1 -3.6 L-1 4 L-4.4 2.8 Z" fill="#2a7aa8"/><path d="M0.6 -3.2 L3.6 -2 L3.6 3 L0.6 4.2 Z" fill="#2a4a5a"/><path d="M-1 -2 H0.6 V3 H-1 Z" fill="#7ab0c8"/><path d="M1.6 -2.4 L5.2 -6.4" stroke="#223" stroke-width="1.4" stroke-linecap="round"/><path d="M-3.6 4.8 H3" stroke="#2a4a3a" stroke-width="0.8"/></g>
<!-- checkbox -->
<rect x="701.6" y="369.8" width="8" height="8" fill="#fff" stroke="#4a4c52" stroke-width="0.9"/>
<path d="M703.2 373.4 L705 376 L708.2 370.8" stroke="#111" stroke-width="1.2" stroke-linecap="round" stroke-linejoin="round"/>
<!-- folder icon -->
<g transform="translate(821.4,391.2)"><path d="M-4.6 -3.4 L-1.6 -4.2 L-0.6 -2.8 L3 -3.6 L3 3 L-4.6 4.4 Z" fill="#46523a"/><path d="M-4.6 4.4 L-2.4 -0.8 L5.6 -2.2 L3 3 Z" fill="#7c8a66"/><path d="M0.4 -4.8 L2.8 -5.8 L2.4 -3.2" stroke="#333" stroke-width="0.7" fill="none"/></g>
<!-- box icon -->
<g transform="translate(839.4,390.8)"><path d="M-4.6 -2 L0 -4.6 L4.6 -2 L0 0.6 Z" fill="#d89a3a"/><path d="M-4.6 -2 L0 0.6 V5 L-4.6 2.4 Z" fill="#1c1c1c"/><path d="M4.6 -2 L0 0.6 V5 L4.6 2.4 Z" fill="#4a3a2a"/><path d="M-3.4 0.4 L-1 1.8" stroke="#c8c8c8" stroke-width="0.9"/></g>
<!-- yellow highlight ring -->
<circle id="ringglow" cx="814.7" cy="304.4" r="20.6" stroke="#eef27a" stroke-width="5.6" opacity="0.28"/>
<circle cx="814.7" cy="304.4" r="20.6" stroke="#e9f25a" stroke-width="3.2" opacity="0.92"/>
<!-- cursor -->
<path d="M813.6 304.6 L813.6 313.2 L815.6 311.4 L817.2 315 L818.6 314.4 L817 310.8 L819.8 310.6 Z" fill="#fdfdfd" stroke="#8a8a8a" stroke-width="0.6" stroke-linejoin="round"/>
</svg>
<!-- name row -->
<div class="abs lbl" style="left:702.5px;top:229.6px;transform:scaleX(0.95)">Name</div>
<div class="abs inp" style="left:728.3px;top:227.5px;width:202px;height:14.2px"><span style="transform:scaleX(0.917)">Wood_Planks_01_1K</span></div>
<div class="abs" style="left:695.8px;top:251.4px;width:260.6px;height:1px;background:#dfe2ea"></div>
<!-- tabs -->
<div class="abs" style="left:695.8px;top:260.3px;width:34.2px;height:13.8px;background:#fcfdff;border:0.7px solid #e4e6ec;border-radius:1.5px"></div>
<div class="abs lbl" style="left:703.3px;top:262.6px;transform:scaleX(0.907)">Select</div>
<div class="abs" style="left:733px;top:257.6px;width:24.6px;height:17.4px;border:0.8px solid #e9ecf2;border-bottom:none;border-radius:2px 2px 0 0;background:#f3f7fb"></div>
<div class="abs" style="left:757.2px;top:274.2px;width:199.6px;height:0.9px;background:#d4d7de"></div>
<div class="abs lbl" style="left:738.2px;top:261.8px;transform:scaleX(0.943)">Edit</div>
<!-- inner scrollbar -->
<div class="abs" style="left:948.4px;top:274.8px;width:8.6px;height:125.6px;background:#eceff4;border:0.6px solid #d8dbe2"></div>
<div class="abs" style="left:949px;top:282.4px;width:7.4px;height:31.6px;background:#fdfdfe"></div>
<div class="abs" style="left:949px;top:275.4px;width:7.4px;height:7px;background:#fbfcfe"></div>
<div class="abs" style="left:949px;top:393px;width:7.4px;height:7px;background:#fbfcfe"></div>
<svg class="abs" style="left:0;top:0" width="1024" height="576" viewBox="0 0 1024 576"><path d="M950.9 280.2 L952.7 277.8 L954.5 280.2 Z M950.9 395.4 L952.7 397.8 L954.5 395.4 Z" fill="#555"/></svg>
<!-- color row -->
<div class="abs lbl" style="left:702.5px;top:295.4px;transform:scaleX(0.93)">Color:</div>
<div class="abs inp" style="left:723.6px;top:293.4px;width:56.8px;height:14.2px"><span style="left:2.6px;color:#333;transform:scaleX(0.96)">Color Wheel</span></div>
<div class="abs" style="left:701px;top:361.6px;width:144.6px;height:1px;background:#dfe2ea"></div>
<div class="abs lbl" style="left:712.9px;top:369px;transform:scaleX(0.97)">Use texture image</div>
<div class="abs inp" style="left:701px;top:384.6px;width:109.4px;height:13.8px"><span style="transform:scaleX(0.927)">Wood_Planks_01_1K_alb.png</span></div>
<svg class="abs" style="left:0;top:0" width="1024" height="576" viewBox="0 0 1024 576"><path d="M771.6 299.4 L776.4 299.4 L774 302.2 Z" fill="#555"/></svg>

</div>

  </div>
  <div id="status"><div class="t">Click to paint an item or object. | Alt = Sample Material. | Shift = Paint All Matching. | Ctrl = Paint All Connected. | Shift + Ctrl = Paint All on Same Object.</div>
  <svg class="abs" style="left:-52px;top:-527px" width="1024" height="576" viewBox="0 0 1024 576" fill="none">
<circle cx="62" cy="537.2" r="3.4" stroke="#c4c4c8" stroke-width="0.8" fill="#ececee"/><path d="M62 535.4 V538.2" stroke="#aaa" stroke-width="1"/>
<circle cx="78" cy="537.2" r="3.5" stroke="#222" stroke-width="1" fill="#fafafa"/><path d="M78 535.2 V538.6" stroke="#222" stroke-width="1.2"/>
<path d="M827.8 529 V545" stroke="#dcdce0" stroke-width="0.8"/>
<rect x="838" y="529.4" width="120" height="15.4" rx="1" fill="#fbfbfc" stroke="#d8d8dc" stroke-width="0.8"/>
</svg>

  </div>
</div>
<div id="taskbar">
<div class="abs" style="left:-52px;top:-547px;width:1024px;height:576px">
<!-- search pill -->
<div class="abs" style="left:196px;top:552.4px;width:133px;height:18.6px;border-radius:9.3px;background:#4a463a"></div>
<div class="abs" style="left:219.6px;top:557.2px;font-size:8px;line-height:10px;color:#ece8dc;white-space:nowrap">Search</div>
<!-- highlighted app bgs -->
<div class="abs" style="left:622.4px;top:550px;width:22.8px;height:23.2px;border-radius:2px;background:#363228"></div>
<div class="abs" style="left:648px;top:549.8px;width:24px;height:23.4px;border-radius:2px;background:#7a4644"></div>
<svg class="abs" style="left:0;top:0" width="1024" height="576" viewBox="0 0 1024 576" fill="none">
<!-- windows logo -->
<g fill="#3cb4ec"><rect x="175.2" y="555.2" width="6.8" height="6.5" rx="0.6"/><rect x="182.8" y="555.2" width="6.8" height="6.5" rx="0.6" fill="#46c0f2"/><rect x="175.2" y="562.5" width="6.8" height="6.5" rx="0.6" fill="#2a9ee0"/><rect x="182.8" y="562.5" width="6.8" height="6.5" rx="0.6" fill="#34aaea"/></g>
<!-- search icon -->
<circle cx="207" cy="561" r="2.9" stroke="#f0ece0" stroke-width="1.1"/><path d="M209.2 563.2 L211.6 565.6" stroke="#f0ece0" stroke-width="1.2" stroke-linecap="round"/>
<!-- task view -->
<rect x="336.4" y="558.4" width="9.6" height="8.6" rx="0.8" fill="#7a7870"/><rect x="340" y="554.8" width="10.4" height="9.2" rx="0.8" fill="#e8e6e2"/><rect x="341.4" y="556.6" width="6" height="5.4" fill="#c8c6c6"/>
<!-- colorful app -->
<g transform="translate(369.5,561)"><path d="M-6.4 -1 L-3 -6 L3 -4.4 L-1 2.6 Z" fill="#3a9ae0"/><path d="M-7 1 L-3.4 -4.4 L0.6 -3 L-3 3.6 Z" fill="#e8d43a"/><path d="M-6.8 2.6 L-4.8 -0.6 L-2.4 3.8 Z" fill="#4ab84a"/><path d="M1.4 -0.6 L7 -1.6 L6.6 4.4 L0.4 4.4 Z" fill="#d84ac0"/><path d="M-1.4 4.2 H6.8 V6 H-1.4 Z" fill="#101010"/><path d="M-0.6 -3 L3.4 -3.8 L0.8 3.8 L-2.6 4 Z" fill="#16161c"/></g>
<!-- blue square -->
<rect x="389.6" y="554" width="13.6" height="14.6" rx="1.4" fill="#2fa2e0"/><path d="M400.6 554.4 Q403 555 403 557.4 V568.4 H401 Z" fill="#7cc8f0"/><path d="M392.4 560.6 H398.6" stroke="#64bcec" stroke-width="1.2"/>
<rect x="395" y="571.2" width="3.2" height="1" rx="0.5" fill="#8a887e"/>
<!-- outlook -->
<g transform="translate(422.4,561)"><path d="M-6.4 -1.6 L1 -5.6 L6.4 -2.4 V5.4 H-6.4 Z" fill="#2a78d0"/><path d="M-6.4 5.4 L2.4 -0.6 L6.4 1.6 V5.4 Z" fill="#1a58a8"/><circle cx="-4.2" cy="2.2" r="2.6" fill="#3a90e8" stroke="#9ac8f4" stroke-width="0.7"/><circle cx="4.6" cy="-5.6" r="4" fill="#1a88c8"/><rect x="2.4" y="-7.2" width="4.6" height="3.2" stroke="#cfe8f6" stroke-width="0.7"/><path d="M2.4 -7.2 L4.7 -5.4 L7 -7.2" stroke="#cfe8f6" stroke-width="0.6"/></g>
<rect x="421.2" y="571.2" width="3.2" height="1" rx="0.5" fill="#8a887e"/>
<!-- brave -->
<g transform="translate(448.6,561)"><path d="M-4.6 -6.4 H4.6 L6.2 -3.4 L5 3 L0 7.4 L-5 3 L-6.2 -3.4 Z" fill="#e8431c"/><path d="M-3.2 -4 L0 -4.8 L3.2 -4 L4 -1 L0 5 L-4 -1 Z" fill="#fbe9e2"/><path d="M-1.6 -2.6 L0 0.8 L1.6 -2.6 M0 0.8 V3.4" stroke="#e8431c" stroke-width="1.1"/></g>
<rect x="447" y="571.2" width="3.2" height="1" rx="0.5" fill="#8a887e"/>
<!-- firefox -->
<g transform="translate(475,561.6)"><circle r="6.4" fill="#f2642a"/><path d="M-6.2 -1.4 Q-6 -5 -3 -6 Q-3.6 -3.6 -1.6 -3 Q1 -7.4 3.4 -6.4 Q2.4 -4.6 4.6 -3.2 Q7 -0.6 6 2.6 Q4 6.6 0 6.4 Q-6 6 -6.2 -1.4 Z" fill="#f89a2a"/><circle cx="-0.6" cy="0.6" r="3.4" fill="#8a3ad0"/><path d="M-4.6 0 Q-2 -3 2 -1.4 Q0.6 0.4 -1 0.4 Q-2 2 0.4 3 Q-3.6 4 -4.6 0 Z" fill="#e8482a"/></g>
<!-- 1password -->
<g transform="translate(501.2,561.4)"><circle r="6.6" fill="#f4f6fa"/><circle r="5.2" stroke="#1c3a8a" stroke-width="1.1" fill="#dfe6f6"/><rect x="-0.9" y="-3" width="1.8" height="6" rx="0.6" fill="#14204a"/></g>
<!-- teams -->
<g transform="translate(527.6,562)"><circle cx="-1.8" cy="-4.4" r="2.2" fill="#7a86e0"/><circle cx="4" cy="-3.4" r="1.6" fill="#5a64c8"/><rect x="-6" y="-1.8" width="8" height="7.6" rx="1.2" fill="#4a54c0"/><rect x="1.6" y="-1.2" width="5.2" height="6.2" rx="1.6" fill="#6a74d8"/><path d="M-3.6 0.4 H-0.4 M-2 0.4 V4.2" stroke="#e6e8fa" stroke-width="1"/><circle cx="5.6" cy="-6.4" r="3.7" fill="#e03a3a"/></g>
<rect x="526.2" y="571.2" width="3.2" height="1" rx="0.5" fill="#8a887e"/>
<!-- notion -->
<g transform="translate(554.4,562.2)"><rect x="-5.6" y="-5.4" width="11.4" height="11.4" rx="1.8" fill="#1c1a16" stroke="#cfcdc6" stroke-width="1.1"/><path d="M-2.6 3.4 V-3 L2.6 3.2 V-3.2" stroke="#f4f2ee" stroke-width="1.3"/><circle cx="6.2" cy="-6.4" r="3.3" fill="#e89a92"/></g>
<rect x="553" y="571.2" width="3.2" height="1" rx="0.5" fill="#8a887e"/>
<!-- revit -->
<g transform="translate(580.8,561)"><rect x="-6.6" y="-7" width="13.2" height="14" rx="1.6" fill="#1c5ad0"/><path d="M-4 -6.6 L4 -6.6 L6.2 -4 V0 H-6.2 V-4 Z" fill="#2f74e8"/><path d="M-1.6 0 V-4.8 H0.6 Q2.2 -4.6 2.2 -3.2 Q2.2 -2 0.6 -1.8 H-1.6 M0.6 -1.8 L2.4 0" stroke="#fff" stroke-width="1.1"/><path d="M-1.4 4 H3" stroke="#cfe0fa" stroke-width="1.2"/></g>
<!-- red circle app -->
<g transform="translate(607.2,562)"><circle r="7.2" fill="#e0382e"/><path d="M0 0 L-1.6 -7 A7.2 7.2 0 0 1 6.6 -2.8 Z" fill="#f06a4a"/><path d="M0 0 L6.6 2.8 A7.2 7.2 0 0 1 -3 6.6 Z" fill="#c8281e"/><path d="M-3.2 3.4 L0 0 L-1.2 -6 M0 0 L5.6 2.2" stroke="#f8d0c0" stroke-width="0.8"/></g>
<rect x="605.6" y="571.2" width="3.2" height="1" rx="0.5" fill="#8a887e"/>
<!-- sketchup -->
<rect x="626.2" y="554" width="14.8" height="14.8" fill="#fbfbfb"/>
<g transform="translate(633.6,561.4)"><circle r="4.9" fill="#1c78a8"/><path d="M-2.8 -3.4 V3.6 M-0.9 -4.6 V4.8 M1 -4.6 V4.8 M2.9 -3.4 V3.6 M-4.4 -1.4 H4.4 M-4.4 1.4 H4.4" stroke="#9ad0e6" stroke-width="0.6"/></g>
<rect x="628.6" y="571.4" width="10" height="1.4" rx="0.7" fill="#6ab0d2"/>
<!-- active app -->
<g transform="translate(659.8,561)"><circle r="6.6" fill="#2a3ca8"/><path d="M-5.4 0.4 A5.4 5.4 0 0 0 5.4 0.4 Z" fill="#f4f6fc"/><circle r="3.1" fill="#f4f6fc"/><circle r="1.9" fill="#2a3ca8"/></g>
<rect x="653.4" y="571.4" width="13.2" height="1.4" rx="0.7" fill="#ea7e6c"/>
<!-- cyan R -->
<g transform="translate(686.2,561.2)"><circle r="7" fill="#1ca8c8"/><path d="M-4.8 5 Q-5.4 -3 0.6 -4.2 Q4.4 -4.4 4.2 -1.4 Q3.6 1 0 1.4 Q-1 3 -1.2 5.6" stroke="#f0fafc" stroke-width="2" stroke-linecap="round"/><path d="M0.6 1.6 L3.6 5.4" stroke="#f0fafc" stroke-width="1.8" stroke-linecap="round"/></g>
<rect x="684.6" y="571.2" width="3.2" height="1" rx="0.5" fill="#8a887e"/>
<!-- chevron -->
<path d="M740.6 563.6 L743.8 560.4 L747 563.6" stroke="#f0ece0" stroke-width="1.1" stroke-linecap="round" stroke-linejoin="round"/>
<!-- clouds -->
<g id="cl"><path d="M758.6 565 Q757.8 562 760.4 561.4 Q761.6 558.2 764.8 559.2 Q767.8 559 768.2 562.2 Q769.6 564.4 767.6 565 Z" fill="#2a8eea"/></g>
<use href="#cl" x="19.4"/><use href="#cl" x="38.8"/>
<!-- mic -->
<rect x="819" y="557" width="3.4" height="6.2" rx="1.7" fill="#86a486"/><path d="M817.4 561.6 Q817.6 565 820.7 565 Q823.8 565 824 561.6 M820.7 565 V567" stroke="#86a486" stroke-width="0.9"/>
<!-- wifi -->
<g stroke="#e8e4d8" stroke-width="0.9" stroke-linecap="round"><path d="M861.6 559.8 Q866.2 555.6 870.8 559.8"/><path d="M863.2 561.8 Q866.2 559.2 869.2 561.8"/><path d="M864.8 563.6 Q866.2 562.4 867.6 563.6"/></g><circle cx="866.2" cy="565" r="0.8" fill="#e8e4d8"/>
<!-- volume -->
<path d="M876.4 560.2 H878 L880.4 558 V565.6 L878 563.4 H876.4 Z" stroke="#e8e4d8" stroke-width="0.9" stroke-linejoin="round"/><path d="M883 559 Q885 562 883 565" stroke="#5a574c" stroke-width="1"/>
<!-- battery-ish -->
<g transform="translate(895,561.6)"><rect x="-4.8" y="-2.6" width="8.6" height="5.4" rx="1" fill="#e8e4d8"/><rect x="3.8" y="-1" width="1.2" height="2.4" fill="#e8e4d8"/><path d="M-3.6 -4.2 Q-1 -6 1.6 -3.6" stroke="#e8e4d8" stroke-width="0.9"/><path d="M-3.4 0.8 L0.4 -1.6" stroke="#2a2618" stroke-width="1"/><circle cx="2.6" cy="2.6" r="2.2" fill="#e8e4d8" stroke="#2a2618" stroke-width="0.6"/></g>
<!-- bell -->
<g transform="translate(956,561.4)"><path d="M-3.6 2.6 Q-2.8 1 -2.8 -1.2 Q-2.6 -4.6 0 -4.6 Q2.6 -4.6 2.8 -1.2 Q2.8 1 3.6 2.6 Z" fill="#f0ece0"/><path d="M-1.2 4 H1.2" stroke="#f0ece0" stroke-width="1.1" stroke-linecap="round"/><circle cx="1.2" cy="-1.4" r="1.5" fill="#2a2618"/><path d="M2.6 -4.6 L4 -5.4" stroke="#f0ece0" stroke-width="0.7"/></g>
</svg>
<div class="abs" style="left:836px;top:553.2px;width:15px;text-align:center;font-size:7.4px;line-height:8.8px;color:#ece8dc;font-weight:bold;transform:scaleX(0.9)">ENG<br>US</div>
<div class="abs" style="left:887px;top:551.6px;width:60px;text-align:right;font-size:8px;line-height:9.6px;color:#f2eee2;white-space:nowrap">9:17 AM<br>2025-11-19</div>
</div>

</div>
<svg class="abs" style="left:0;top:0" width="1024" height="576" viewBox="0 0 1024 576" fill="none">
<defs><clipPath id="wcam"><circle cx="886.4" cy="418.8" r="51.8"/></clipPath>
<filter id="bl" x="-10%" y="-10%" width="120%" height="120%"><feGaussianBlur stdDeviation="0.9"/></filter>
<linearGradient id="sh" x1="0" y1="0" x2="1" y2="0"><stop offset="0" stop-color="#a4acb6"/><stop offset="0.5" stop-color="#b4bcc8"/><stop offset="1" stop-color="#aab2c0"/></linearGradient>
</defs>
<g clip-path="url(#wcam)"><g filter="url(#bl)">
<!-- shirt -->
<path d="M846 462 Q852 446 864 439 Q872 435 878 432.4 L888 440 L902 430.6 Q912 431 920 433.4 Q930 437 936 446 L940 480 L846 480 Z" fill="url(#sh)"/>
<path d="M888 440 L886 470" stroke="#8e96a4" stroke-width="1"/>
<path d="M878 432.4 L884 442 L888 440 M902 430.6 L896 441 L888 440" stroke="#98a0ae" stroke-width="1.1" fill="#bcc4d0"/>
<!-- neck -->
<path d="M880 428 L882 436 L888 440.4 L896 436 L899 426 Z" fill="#8a6258"/>
<!-- face -->
<path d="M876 402 Q875.4 420 878.6 429 Q882 437.8 889 438.4 Q896 437.8 899 429 Q901.6 418 901 402 Z" fill="#9c786c"/>
<path d="M878 408 Q888 404.6 899.6 408 L899 416 Q888 413 878.6 416 Z" fill="#a98a7e" opacity="0.9"/>
<path d="M876.4 414 Q877.6 427 881.6 434 Q875.6 427 876.4 414 Z M900.8 414 Q899.8 427 896.2 434 Q901.4 427 900.8 414 Z" fill="#7c5a52" stroke="#7c5a52" stroke-width="1.6"/>
<path d="M879 417.8 Q882.4 416.2 886 417.8 M891.6 417.8 Q895 416.2 898.2 417.8" stroke="#4a3430" stroke-width="2"/>
<path d="M888.4 419 Q887.6 423.4 886.8 425.6 Q888.6 426.8 890.8 425.6" stroke="#7e564c" stroke-width="1.2"/>
<path d="M884.4 431.2 Q888.2 433.4 892 431" stroke="#683e3a" stroke-width="1.8"/>
<path d="M882 435 Q888.6 438.6 895 434.6" stroke="#805a50" stroke-width="1.6"/>
<!-- hair -->
<path d="M874.4 418 Q871.4 398.4 882.4 395.2 Q889.6 393 896.2 395.2 Q905.6 398.8 902.8 418.6 Q902 412 900.2 409.2 Q896 406 889 407.2 Q882 406.2 877.2 409.6 Q875.4 412 874.4 418 Z" fill="#2a2523"/>
</g></g>
</svg>

</div>
</body>
</html>
